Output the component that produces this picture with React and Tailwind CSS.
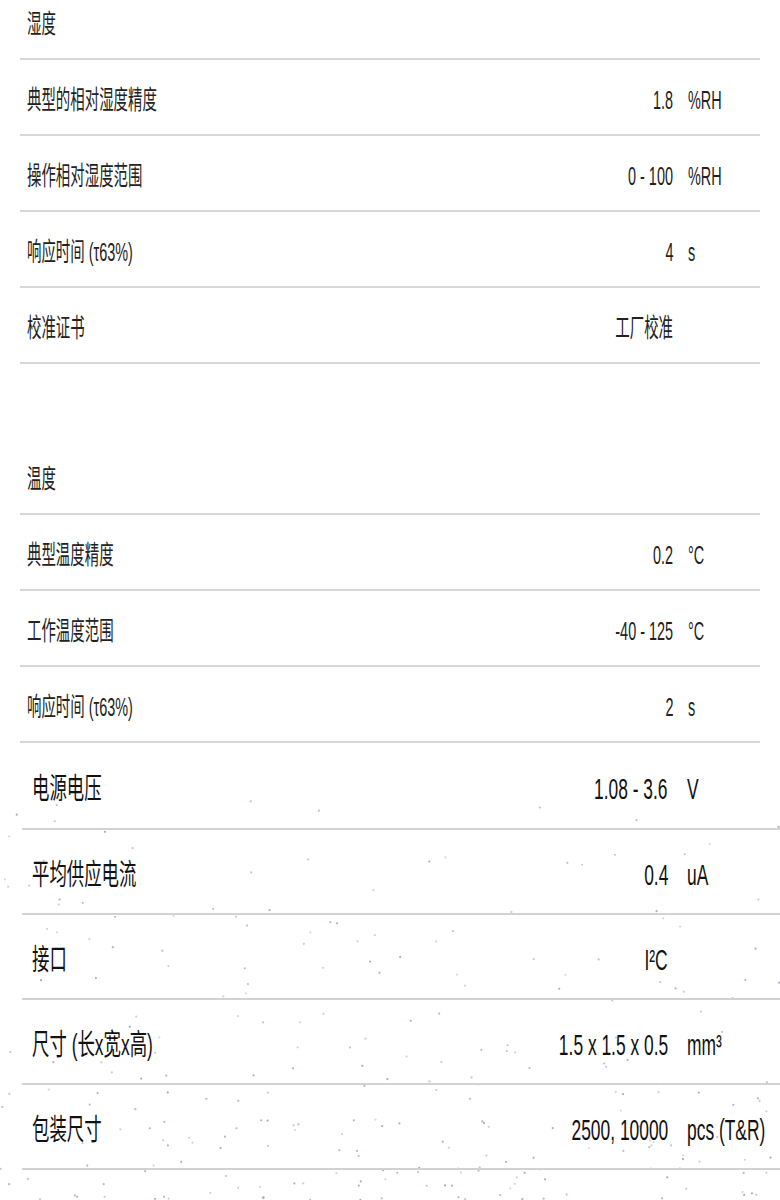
import React from 'react';

const humidity = [
  { label: '典型的相对湿度精度', value: '1.8', unit: '%RH' },
  { label: '操作相对湿度范围', value: '0 - 100', unit: '%RH' },
  { label: '响应时间 (τ63%)', value: '4', unit: 's' },
  { label: '校准证书', value: '工厂校准', unit: '' },
];

const temperature = [
  { label: '典型温度精度', value: '0.2', unit: '°C' },
  { label: '工作温度范围', value: '-40 - 125', unit: '°C' },
  { label: '响应时间 (τ63%)', value: '2', unit: 's' },
];

const general = [
  { label: '电源电压', value: '1.08 - 3.6', unit: 'V' },
  { label: '平均供应电流', value: '0.4', unit: 'uA' },
  { label: '接口', value: 'I²C', unit: '' },
  { label: '尺寸 (长x宽x高)', value: '1.5 x 1.5 x 0.5', unit: 'mm³' },
  { label: '包装尺寸', value: '2500, 10000', unit: 'pcs (T&R)' },
];

// simple seeded random so the dots stay put between renders
const makeDots = () => {
  let s = 1337;
  const rnd = () => {
    s = (s * 16807) % 2147483647;
    return s / 2147483647;
  };
  const dots = [];
  for (let i = 0; i < 260; i++) {
    const x = rnd() * 780;
    const y = 457 - 400 * Math.pow(rnd(), 1.7);
    dots.push({ x, y, o: 0.35 + rnd() * 0.45 });
  }
  return dots;
};

const dots = makeDots();

const SmallTable = ({ title, rows }) => (
  <div className="ml-[20px] w-[740px] text-[26px] leading-none text-[#222]">
    <div className="h-[60px] border-b-2 border-[#d7d7d7] flex items-center pb-[10px] pl-[7px]">
      <span className="inline-block origin-left scale-x-[0.555] whitespace-nowrap">{title}</span>
    </div>
    {rows.map((r, i) => (
      <div key={i} className="h-[76px] border-b-2 border-[#d7d7d7] flex items-center pt-[6px] pl-[7px]">
        <span className="inline-block origin-left scale-x-[0.555] whitespace-nowrap">{r.label}</span>
        <div className="ml-auto text-right">
          <span className="inline-block origin-right scale-x-[0.555] whitespace-nowrap">{r.value}</span>
        </div>
        <div className="w-[87px] pl-[15px]">
          <span className="inline-block origin-left scale-x-[0.555] whitespace-nowrap">{r.unit}</span>
        </div>
      </div>
    ))}
  </div>
);

export default function App() {
  return (
    <div
      className="w-[780px] min-h-[1200px] bg-white overflow-hidden"
      style={{ fontFamily: '"Liberation Sans", "Noto Sans CJK SC", sans-serif' }}
    >
      <SmallTable title="湿度" rows={humidity} />
      <div className="mt-[91px]">
        <SmallTable title="温度" rows={temperature} />
      </div>

      <div className="relative">
        <svg className="absolute inset-0 w-[780px] h-[457px]" viewBox="0 0 780 457">
          {dots.map((d, i) => (
            <circle key={i} cx={d.x} cy={d.y} r="1.1" fill="#8a93c8" opacity={d.o} />
          ))}
        </svg>
        <div className="relative ml-[22px] w-[758px] text-[29px] leading-none text-[#111]">
          {general.map((r, i) => (
            <div
              key={i}
              className={`${i === 0 ? 'h-[87px]' : 'h-[85px]'} border-b-2 border-[#d2d2d2] flex items-center pt-[8px] pl-[10px]`}
            >
              <span className="inline-block origin-left scale-x-[0.6] whitespace-nowrap">{r.label}</span>
              <div className="ml-auto text-right">
                <span className="inline-block origin-right scale-x-[0.6] whitespace-nowrap">{r.value}</span>
              </div>
              <div className="w-[112px] pl-[19px]">
                <span className="inline-block origin-left scale-x-[0.6] whitespace-nowrap">{r.unit}</span>
              </div>
            </div>
          ))}
        </div>
      </div>
    </div>
  );
}
